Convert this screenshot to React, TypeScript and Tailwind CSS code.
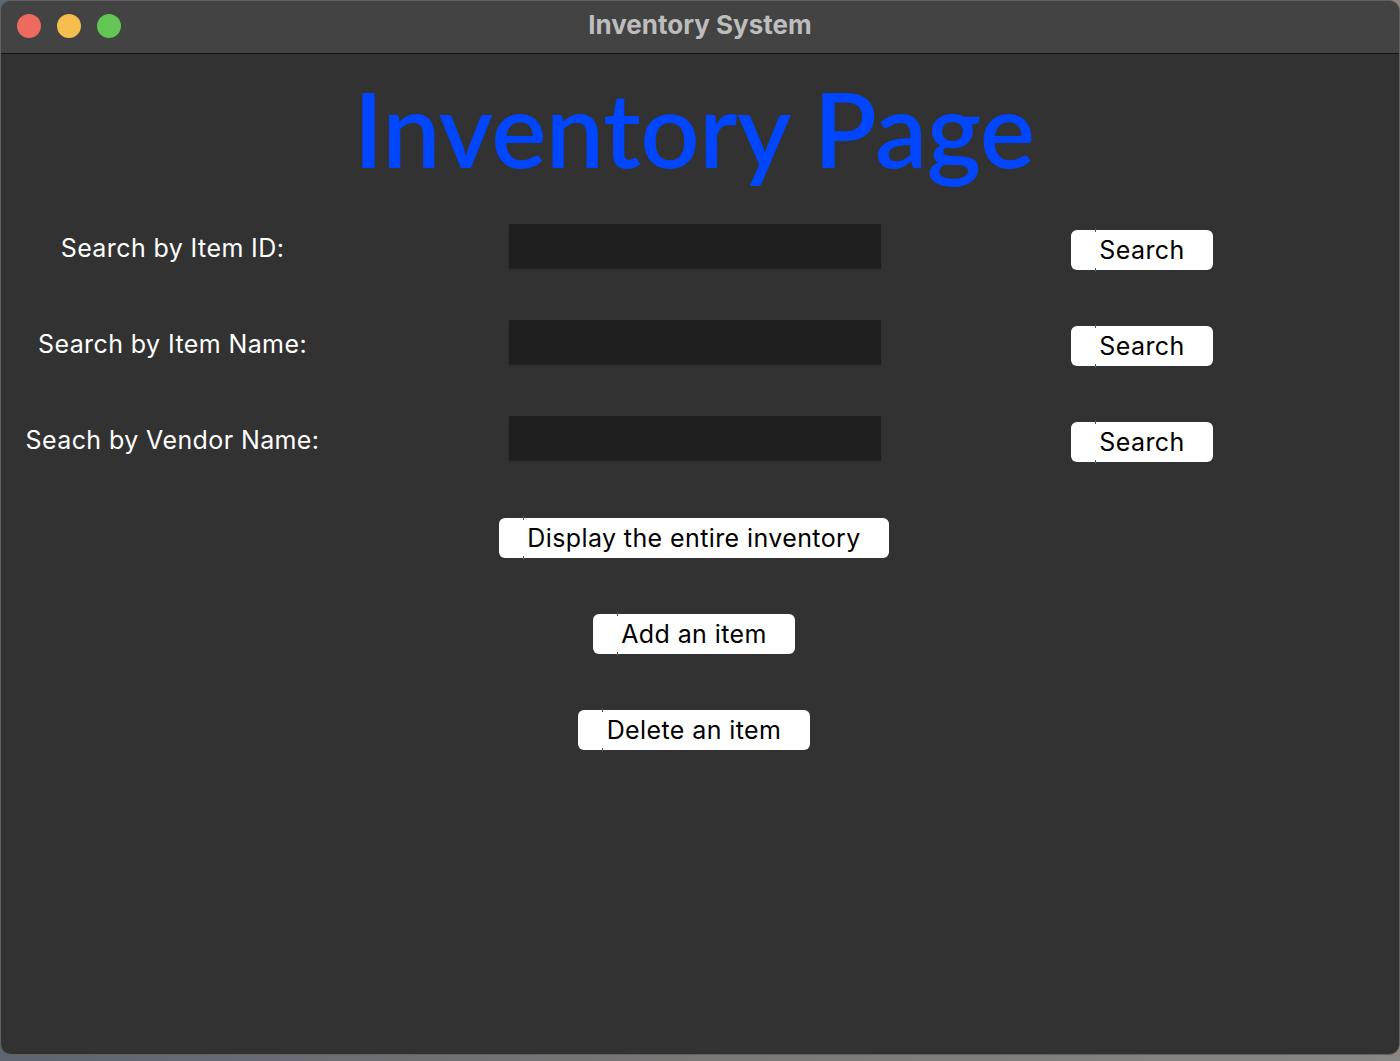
import React from "react";

const sf = { fontFamily: "Inter, 'Noto Sans', sans-serif" };

function Btn({ label, w, tick }: { label: string; w: string; tick: number }) {
  return (
    <div
      className={`relative mt-[6px] flex h-[40px] ${w} items-center justify-center rounded-[6px] bg-white text-[25px] tracking-[0.4px] text-black`}
      style={sf}
    >
      <span
        className="absolute top-[-2px] h-[4px] w-px bg-[#555]"
        style={{ left: tick }}
      />
      <span
        className="absolute bottom-[-2px] h-[4px] w-px bg-[#555]"
        style={{ left: tick }}
      />
      <span className="leading-none">{label}</span>
    </div>
  );
}

function SearchRow({ label }: { label: string }) {
  return (
    <div className="flex h-[96px] items-center">
      <div
        className="mt-[4px] w-[343px] text-center text-[25px] tracking-[0.4px] text-white"
        style={sf}
      >
        {label}
      </div>
      <div className="-mt-[2px] ml-[165px] h-[44px] w-[372px] bg-[#1f1f1f] shadow-[0_1px_1px_rgba(0,0,0,0.25)]" />
      <div className="ml-[190px]">
        <Btn label="Search" w="w-[142px]" tick={24} />
      </div>
    </div>
  );
}

function CenterRow({ label, w, tick }: { label: string; w: string; tick: number }) {
  return (
    <div className="flex h-[96px] w-[1386px] items-center justify-center">
      <Btn label={label} w={w} tick={tick} />
    </div>
  );
}

export default function App() {
  return (
    <div className="h-[1061px] w-[1400px] overflow-hidden bg-gradient-to-r from-[#5d6570] via-[#7a7776] to-[#8a8684]">
      <div className="flex h-[1055px] w-[1400px] flex-col overflow-hidden rounded-[11px] border border-[#626262] bg-[#323232]">
        <div className="relative flex h-[53px] shrink-0 items-center justify-center border-b border-[#161616] bg-[#434343]">
          <div className="absolute left-[16px] top-[13px] flex gap-[16px]">
            <span className="h-[24px] w-[24px] rounded-full bg-[#ee6a5f]" />
            <span className="h-[24px] w-[24px] rounded-full bg-[#f5be4f]" />
            <span className="h-[24px] w-[24px] rounded-full bg-[#62c554]" />
          </div>
          <span
            className="-mt-[5px] text-[26px] font-bold text-[#bdbdbd]"
            style={{ fontFamily: "Inter, 'Noto Sans', sans-serif" }}
          >
            Inventory System
          </span>
        </div>
        <div className="flex flex-col">
          <div className="flex h-[145px] w-[1386px] items-start justify-center pt-[22px]">
            <span
              className="text-[104px] font-semibold leading-none tracking-[-0.5px] text-[#0046ff]"
              style={{ fontFamily: "Lato, 'Noto Sans', sans-serif" }}
            >
              Inventory Page
            </span>
          </div>
          <SearchRow label="Search by Item ID:" />
          <SearchRow label="Search by Item Name:" />
          <SearchRow label="Seach by Vendor Name:" />
          <CenterRow label="Display the entire inventory" w="w-[390px]" tick={24} />
          <CenterRow label="Add an item" w="w-[202px]" tick={24} />
          <CenterRow label="Delete an item" w="w-[232px]" tick={24} />
        </div>
      </div>
    </div>
  );
}
